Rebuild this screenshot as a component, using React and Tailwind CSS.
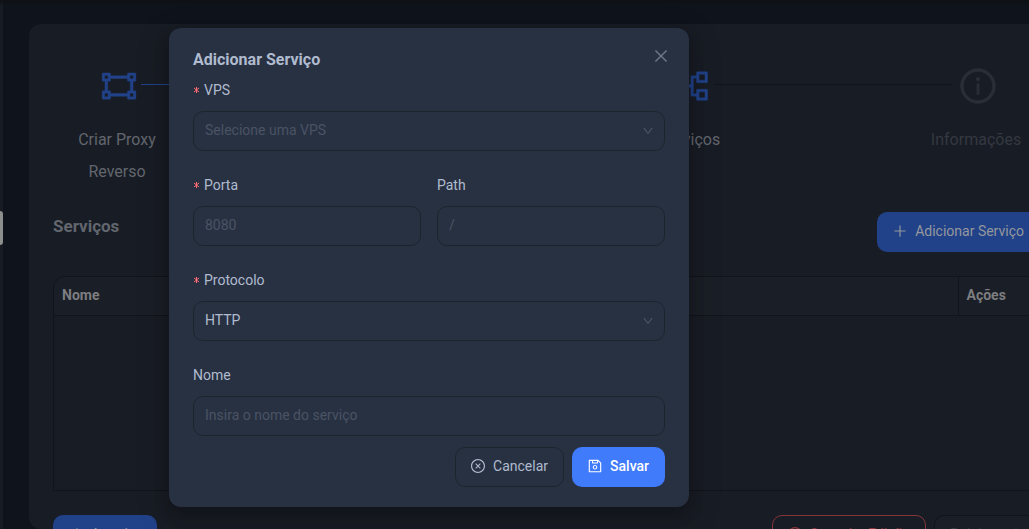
import {
  AiOutlineArrowLeft,
  AiOutlineArrowRight,
  AiOutlineClose,
  AiOutlineCloseCircle,
  AiOutlineDown,
  AiOutlineGateway,
  AiOutlineInfoCircle,
  AiOutlinePartition,
  AiOutlinePlus,
  AiOutlineSave,
} from "react-icons/ai";

const control =
  "block h-10 w-full appearance-none rounded-[10px] border border-[#1c242e] bg-transparent px-[11px] pb-0.5 text-sm outline-none placeholder:text-[#4a5364]";

const button = "flex h-10 items-center gap-[7px] rounded-[10px] pb-0.5";

function Step({ icon: Icon, label, tone, text, line, grow }) {
  return (
    <li className={`flex ${grow}`}>
      <div className="flex w-32 shrink-0 flex-col items-center px-5 text-center">
        <Icon strokeWidth="10" className={`ml-1 size-10 shrink-0 ${tone}`} />
        <span className={`mt-[18px] text-base leading-8 ${text}`}>{label}</span>
      </div>
      {line && <div className={`-mx-10 mt-[18px] h-px grow ${line}`} />}
    </li>
  );
}

function RequiredMark() {
  return (
    <svg viewBox="0 0 7 22" className="mr-1 h-[22px] w-[7px] text-[#ff6b72]" fill="none" stroke="currentColor" aria-hidden="true">
      <path d="M3.5 8v6M1 9l5 4M6 9l-5 4" />
    </svg>
  );
}

function Field({ id, label, required, children }) {
  return (
    <div className="min-w-0 flex-1">
      <label htmlFor={id} className="flex h-8 items-start text-sm leading-[22px]">
        {required && <RequiredMark />}
        {label}
      </label>
      {children}
    </div>
  );
}

function Select({ id, placeholder, options, value }) {
  return (
    <div className="relative">
      <select
        id={id}
        defaultValue={value ?? ""}
        className={`${control} ${value ? "" : "text-[#4a5364]"}`}
      >
        {placeholder && <option value="">{placeholder}</option>}
        {options.map((option) => (
          <option key={option}>{option}</option>
        ))}
      </select>
      <AiOutlineDown className="pointer-events-none absolute top-3.5 right-[11px] size-3 text-[#505a6b]" />
    </div>
  );
}

function ServiceDialog() {
  return (
    <form
      role="dialog"
      aria-labelledby="dialog-title"
      className="w-[520px] rounded-xl bg-[#283142] px-6 py-5 text-[#b0bbcf] shadow-[0_6px_16px_rgba(0,0,0,0.2),0_9px_28px_8px_rgba(0,0,0,0.12)]"
    >
      <div className="mb-[7px] flex h-6 items-center justify-between">
        <h2 id="dialog-title" className="text-base leading-6 font-bold">
          Adicionar Serviço
        </h2>
        <button type="button" aria-label="Fechar" className="-mr-[5px] mb-2 text-[#6f7888]">
          <AiOutlineClose className="size-[18px]" />
        </button>
      </div>
      <div className="flex flex-col gap-[23px]">
        <Field id="vps" label="VPS" required>
          <Select id="vps" placeholder="Selecione uma VPS" options={[]} />
        </Field>
        <div className="flex gap-4">
          <Field id="porta" label="Porta" required>
            <input id="porta" placeholder="8080" className={control} />
          </Field>
          <Field id="path" label="Path">
            <input id="path" placeholder="/" className={control} />
          </Field>
        </div>
        <Field id="protocolo" label="Protocolo" required>
          <Select id="protocolo" value="HTTP" options={["HTTP", "HTTPS"]} />
        </Field>
        <Field id="nome" label="Nome">
          <input id="nome" placeholder="Insira o nome do serviço" className={control} />
        </Field>
      </div>
      <div className="mt-[11px] flex justify-end gap-2 text-sm">
        <button type="button" className={`${button} border border-[#1c242e] pr-[15px] pl-[14px]`}>
          <AiOutlineCloseCircle className="size-4" />
          Cancelar
        </button>
        <button type="submit" className={`${button} bg-[#3f7bfa] pr-4 pl-[15px] font-medium text-white`}>
          <AiOutlineSave className="size-4" />
          Salvar
        </button>
      </div>
    </form>
  );
}

export default function App() {
  return (
    <div className="relative flex h-screen overflow-hidden bg-[#0f131b] font-[Roboto,sans-serif] text-[#62666e]">
      <aside className="flex w-[3px] shrink-0 items-center bg-[#171b23] pb-[73px]">
        <div className="h-[34px] w-full rounded-r-[3px] bg-[#8d8f8f]" />
      </aside>

      <main className="-mr-[35px] ml-[26px] mt-6 min-w-0 grow rounded-xl bg-[#181c24] p-6">
        <ol className="mt-[18px] flex">
          <Step
            icon={AiOutlineGateway}
            label="Criar Proxy Reverso"
            tone="text-[#214289]"
            text="text-[#62666e]"
            line="bg-[#214289]"
            grow="flex-[2]"
          />
          <Step
            icon={AiOutlinePartition}
            label="Serviços"
            tone="text-[#214289]"
            text="text-[#62666e]"
            line="bg-[#10141b]"
            grow="flex-1"
          />
          <Step icon={AiOutlineInfoCircle} label="Informações" tone="text-[#2a2e37]" text="text-[#343841]" grow="" />
        </ol>

        <div className="mt-6 flex items-center justify-between">
          <h1 className="mb-3 text-[17px] leading-6 font-bold">Serviços</h1>
          <button type="button" className={`${button} bg-[#214289] pr-4 pl-[15px] text-sm text-[#94979d]`}>
            <AiOutlinePlus className="size-4" />
            Adicionar Serviço
          </button>
        </div>

        <div className="mt-6 overflow-hidden rounded-t-xl border border-[#10141b]">
          <table className="w-full border-collapse text-left text-sm">
            <thead className="bg-[#1a1e26] text-[#7c7d80]">
              <tr className="h-[38px]">
                <th className="border-r border-b border-[#10141b] px-2 pb-0.5 font-bold">Nome</th>
                <th className="w-[81px] border-b border-[#10141b] px-2 pb-0.5 font-bold">Ações</th>
              </tr>
            </thead>
            <tbody>
              <tr className="h-[175px]">
                <td colSpan={2} />
              </tr>
            </tbody>
          </table>
        </div>

        <div className="mt-6 flex gap-2 text-sm">
          <button type="button" className={`${button} mr-auto bg-[#214289] pr-4 pl-[15px] text-[#94979d]`}>
            <AiOutlineArrowLeft className="size-4" />
            Anterior
          </button>
          <button type="button" className={`${button} border border-[#87353a] pr-[15px] pl-[14px] text-[#87353a]`}>
            <AiOutlineCloseCircle className="size-4" />
            Cancelar Edição
          </button>
          <button
            type="button"
            disabled
            className={`${button} border border-[#10141b] bg-[#1a1e26] pr-[14px] pl-[15px] text-[#343841]`}
          >
            Próximo
            <AiOutlineArrowRight className="size-4" />
          </button>
        </div>
      </main>

      <div className="absolute inset-x-0 top-0 h-1.5 bg-linear-to-b from-[#0e1013] to-transparent" />
      <div className="absolute top-7 left-[169px]">
        <ServiceDialog />
      </div>
    </div>
  );
}
